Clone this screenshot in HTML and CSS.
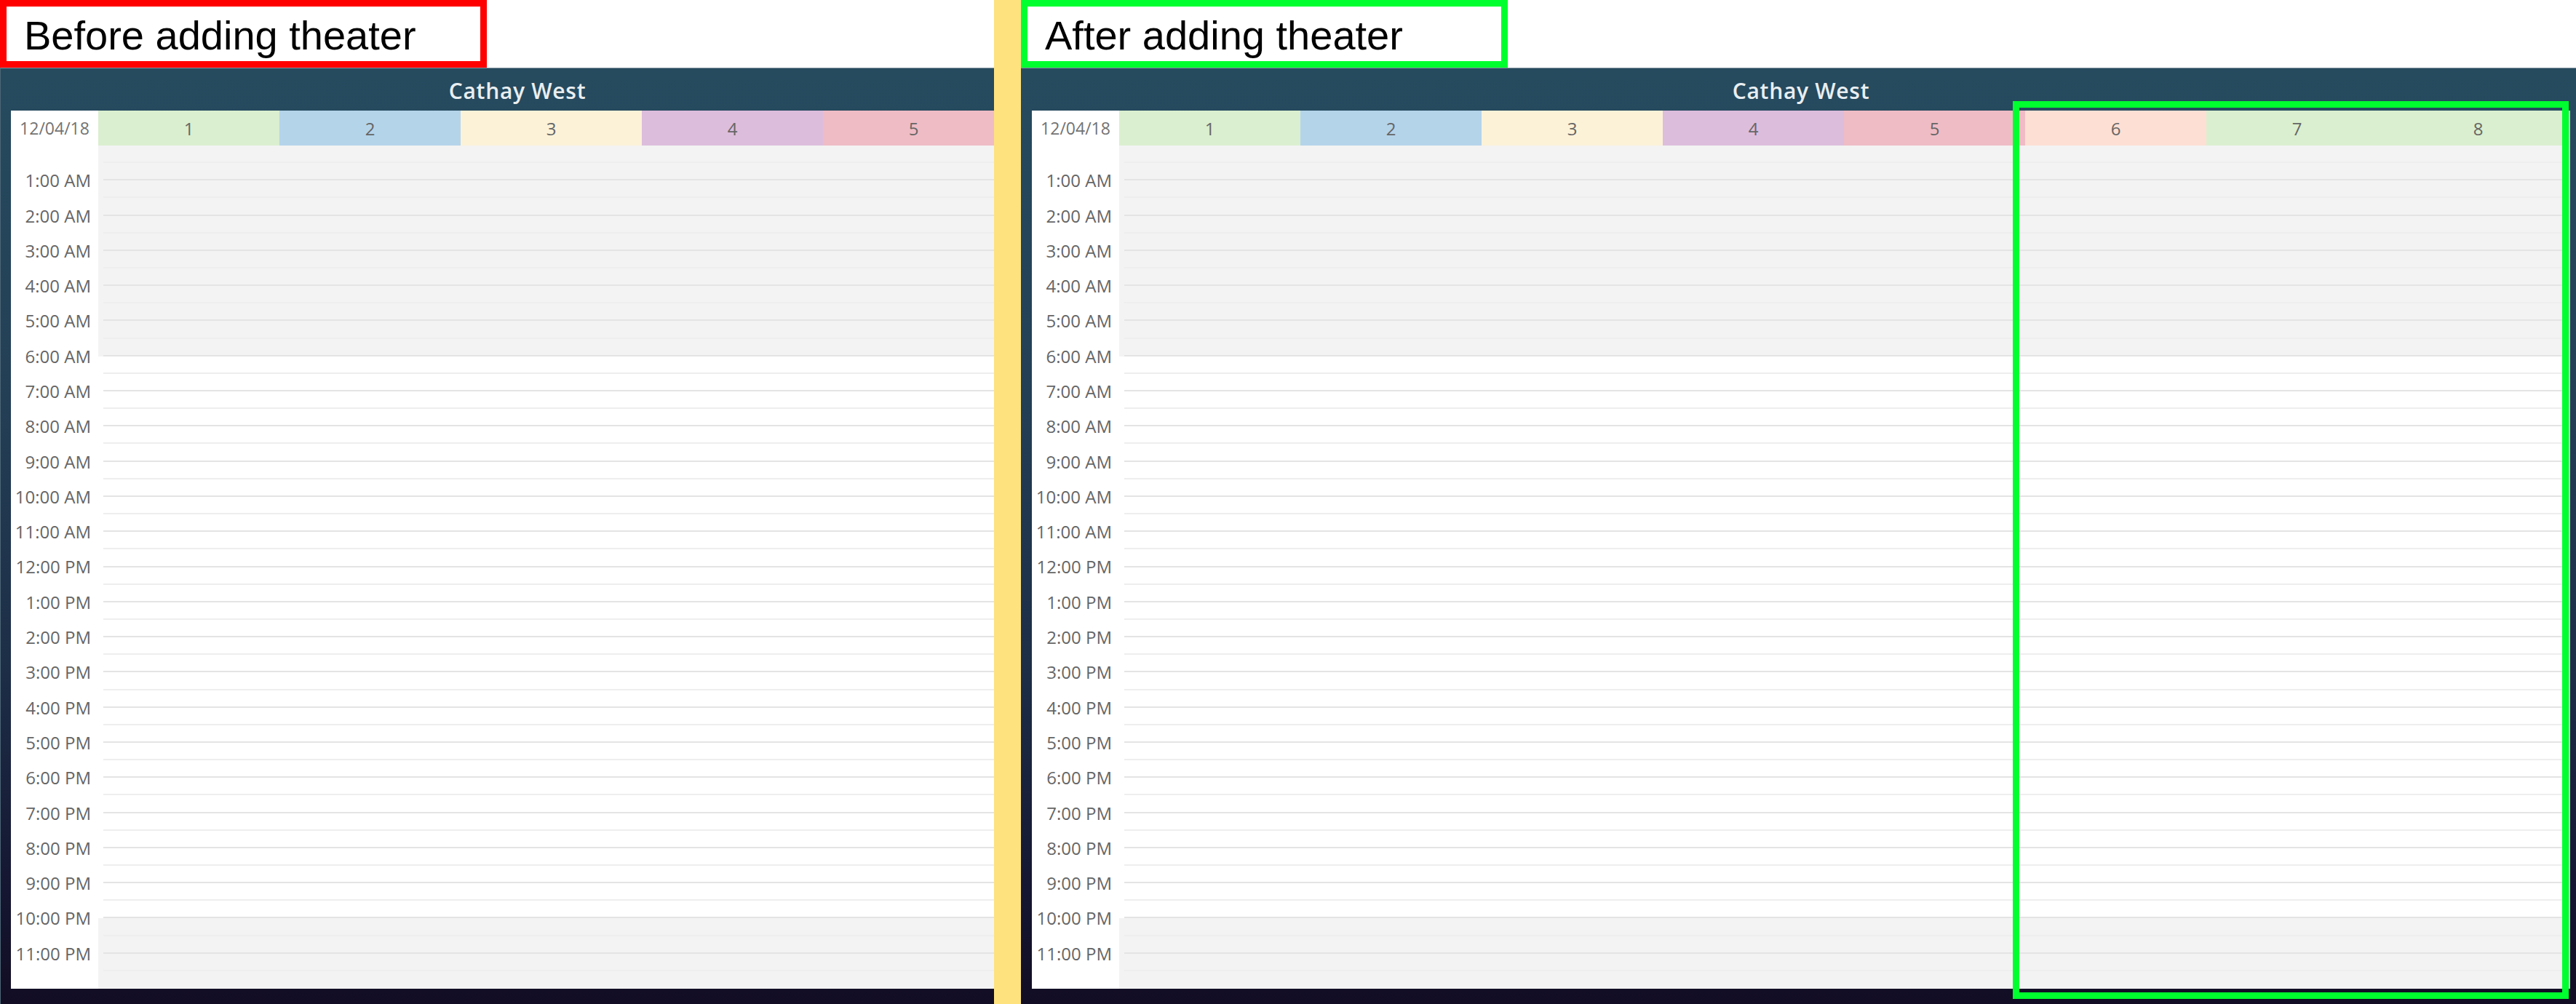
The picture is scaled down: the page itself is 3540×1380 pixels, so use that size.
FILE: index.html
```html
<!DOCTYPE html>
<html lang="en">
<head>
<meta charset="utf-8">
<title>Cathay West – before / after adding theater</title>
<link rel="stylesheet" href="styles.css">
</head>
<body>
<div class="page">
  <section class="side side-before">
    <div class="label label-red">Before adding theater</div>
    <div class="panel panel-left">
      <div class="panel-inner panel-inner-wide">
        <div class="title">Cathay West</div>
        <div class="cal">
          <div class="cal-head cols-5">
            <div class="hcell date">12/04/18</div>
            <div class="hcell c-green">1</div>
            <div class="hcell c-blue">2</div>
            <div class="hcell c-cream">3</div>
            <div class="hcell c-lav">4</div>
            <div class="hcell c-pink">5</div>
          </div>
          <div class="cal-body">
            <div class="times">
              <div class="tsp"></div>
              <div class="t">1:00 AM</div><div class="t">2:00 AM</div><div class="t">3:00 AM</div><div class="t">4:00 AM</div>
              <div class="t">5:00 AM</div><div class="t">6:00 AM</div><div class="t">7:00 AM</div><div class="t">8:00 AM</div>
              <div class="t">9:00 AM</div><div class="t">10:00 AM</div><div class="t">11:00 AM</div><div class="t">12:00 PM</div>
              <div class="t">1:00 PM</div><div class="t">2:00 PM</div><div class="t">3:00 PM</div><div class="t">4:00 PM</div>
              <div class="t">5:00 PM</div><div class="t">6:00 PM</div><div class="t">7:00 PM</div><div class="t">8:00 PM</div>
              <div class="t">9:00 PM</div><div class="t">10:00 PM</div><div class="t">11:00 PM</div>
              <div class="tsp"></div>
            </div>
            <div class="slots">
              <div class="slot off"></div><div class="slot off hr"></div>
              <div class="slot off"></div><div class="slot off hr"></div>
              <div class="slot off"></div><div class="slot off hr"></div>
              <div class="slot off"></div><div class="slot off hr"></div>
              <div class="slot off"></div><div class="slot off hr"></div>
              <div class="slot off"></div><div class="slot off hr"></div>
              <div class="slot"></div><div class="slot hr"></div>
              <div class="slot"></div><div class="slot hr"></div>
              <div class="slot"></div><div class="slot hr"></div>
              <div class="slot"></div><div class="slot hr"></div>
              <div class="slot"></div><div class="slot hr"></div>
              <div class="slot"></div><div class="slot hr"></div>
              <div class="slot"></div><div class="slot hr"></div>
              <div class="slot"></div><div class="slot hr"></div>
              <div class="slot"></div><div class="slot hr"></div>
              <div class="slot"></div><div class="slot hr"></div>
              <div class="slot"></div><div class="slot hr"></div>
              <div class="slot"></div><div class="slot hr"></div>
              <div class="slot"></div><div class="slot hr"></div>
              <div class="slot"></div><div class="slot hr"></div>
              <div class="slot"></div><div class="slot hr"></div>
              <div class="slot"></div><div class="slot hr"></div>
              <div class="slot off"></div><div class="slot off hr"></div>
              <div class="slot off"></div><div class="slot off last"></div>
            </div>
          </div>
        </div>
      </div>
    </div>
  </section>

  <div class="divider"></div>

  <section class="side side-after">
    <div class="label label-green">After adding theater</div>
    <div class="panel panel-right">
      <div class="panel-inner">
        <div class="title">Cathay West</div>
        <div class="cal cal-edge">
          <div class="cal-head cols-8">
            <div class="hcell date">12/04/18</div>
            <div class="hcell c-green">1</div>
            <div class="hcell c-blue">2</div>
            <div class="hcell c-cream">3</div>
            <div class="hcell c-lav">4</div>
            <div class="hcell c-pink">5</div>
            <div class="hcell c-peach">6</div>
            <div class="hcell c-green">7</div>
            <div class="hcell c-green">8</div>
          </div>
          <div class="cal-body">
            <div class="times">
              <div class="tsp"></div>
              <div class="t">1:00 AM</div><div class="t">2:00 AM</div><div class="t">3:00 AM</div><div class="t">4:00 AM</div>
              <div class="t">5:00 AM</div><div class="t">6:00 AM</div><div class="t">7:00 AM</div><div class="t">8:00 AM</div>
              <div class="t">9:00 AM</div><div class="t">10:00 AM</div><div class="t">11:00 AM</div><div class="t">12:00 PM</div>
              <div class="t">1:00 PM</div><div class="t">2:00 PM</div><div class="t">3:00 PM</div><div class="t">4:00 PM</div>
              <div class="t">5:00 PM</div><div class="t">6:00 PM</div><div class="t">7:00 PM</div><div class="t">8:00 PM</div>
              <div class="t">9:00 PM</div><div class="t">10:00 PM</div><div class="t">11:00 PM</div>
              <div class="tsp"></div>
            </div>
            <div class="slots">
              <div class="slot off"></div><div class="slot off hr"></div>
              <div class="slot off"></div><div class="slot off hr"></div>
              <div class="slot off"></div><div class="slot off hr"></div>
              <div class="slot off"></div><div class="slot off hr"></div>
              <div class="slot off"></div><div class="slot off hr"></div>
              <div class="slot off"></div><div class="slot off hr"></div>
              <div class="slot"></div><div class="slot hr"></div>
              <div class="slot"></div><div class="slot hr"></div>
              <div class="slot"></div><div class="slot hr"></div>
              <div class="slot"></div><div class="slot hr"></div>
              <div class="slot"></div><div class="slot hr"></div>
              <div class="slot"></div><div class="slot hr"></div>
              <div class="slot"></div><div class="slot hr"></div>
              <div class="slot"></div><div class="slot hr"></div>
              <div class="slot"></div><div class="slot hr"></div>
              <div class="slot"></div><div class="slot hr"></div>
              <div class="slot"></div><div class="slot hr"></div>
              <div class="slot"></div><div class="slot hr"></div>
              <div class="slot"></div><div class="slot hr"></div>
              <div class="slot"></div><div class="slot hr"></div>
              <div class="slot"></div><div class="slot hr"></div>
              <div class="slot"></div><div class="slot hr"></div>
              <div class="slot off"></div><div class="slot off hr"></div>
              <div class="slot off"></div><div class="slot off last"></div>
            </div>
          </div>
        </div>
      </div>
    </div>
    <div class="highlight"></div>
  </section>
</div>
</body>
</html>
```

FILE: styles.css
```css
* { box-sizing: border-box; }

html, body {
  margin: 0;
  padding: 0;
  background: #ffffff;
}

.page {
  display: flex;
  width: 3540px;
  height: 1380px;
  overflow: hidden;
}

.side {
  display: flex;
  flex-direction: column;
  height: 100%;
  min-width: 0;
}

.side-before {
  width: 1366px;
  flex-shrink: 0;
  overflow: hidden;
}

.side-after {
  flex: 1;
  position: relative;
}

.divider {
  width: 37px;
  flex-shrink: 0;
  background: #fee27e;
}

/* annotation labels */
.label {
  width: 669px;
  height: 93px;
  flex-shrink: 0;
  border: 9px solid;
  padding: 9px 0 0 24px;
  font-family: "Liberation Sans", Arial, sans-serif;
  font-size: 56px;
  line-height: 62px;
  color: #000;
  background: #fff;
  white-space: nowrap;
}

.label-red { border-color: #ff0000; }
.label-green { border-color: #00ff2f; }

/* dark application panel */
.panel {
  flex: 1;
  min-height: 0;
  border-top: 1px solid #7f909b;
  background: linear-gradient(180deg, #264b5f 0%, #233f56 35%, #1d2d46 65%, #151631 88%, #120d24 100%);
  padding: 0 0 21px 15px;
  font-family: "Open Sans", "Noto Sans", sans-serif;
}

.panel-left {
  border-left: 1px solid #4d6676;
  padding-left: 14px;
}

.panel-right {
  padding-right: 8px;
}

.panel-inner {
  display: flex;
  flex-direction: column;
  height: 100%;
}

.panel-inner-wide {
  width: 1392px;
}

.title {
  height: 58px;
  flex-shrink: 0;
  display: flex;
  align-items: center;
  justify-content: center;
  color: #e9eef1;
  font-size: 30px;
  font-weight: 600;
  letter-spacing: 0.7px;
  padding-top: 2px;
}

.cal {
  flex: 1;
  min-height: 0;
  display: flex;
  flex-direction: column;
  background: #ffffff;
}

.cal-edge {
  border-right: 2px solid #c9cbcd;
}

.cal-head {
  height: 48px;
  flex-shrink: 0;
  display: grid;
}

.cols-5 { grid-template-columns: 120px repeat(5, 249px) 1fr; }
.cols-8 { grid-template-columns: 120px repeat(8, 1fr); }

.hcell {
  display: flex;
  align-items: center;
  justify-content: center;
  font-size: 24px;
  color: #666666;
}

.hcell.date {
  background: #ffffff;
  color: #737373;
  font-size: 23px;
}

.c-green { background: #daefcf; }
.c-blue { background: #b4d4ea; }
.c-cream { background: #fcf2d8; }
.c-lav { background: #dcbddc; }
.c-pink { background: #efbcc5; }
.c-peach { background: #fddfd4; }

.cal-body {
  flex: 1;
  min-height: 0;
  display: grid;
  grid-template-columns: 120px 1fr;
}

.times {
  display: grid;
  grid-template-rows: 0.5fr repeat(23, 1fr) 0.5fr;
  min-height: 0;
  background: #ffffff;
}

.t {
  display: flex;
  align-items: center;
  justify-content: flex-end;
  padding-right: 10px;
  font-size: 24px;
  line-height: 1;
  color: #666666;
  white-space: nowrap;
  min-height: 0;
}

.slots {
  display: grid;
  grid-template-rows: repeat(48, 1fr);
  min-height: 0;
}

.slot {
  background-color: #ffffff;
  background-image: linear-gradient(#eeeeee, #eeeeee);
  background-repeat: no-repeat;
  background-position: 7px 100%;
  background-size: calc(100% - 7px) 2px;
  min-height: 0;
}

.slot.off { background-color: #f3f3f3; }
.slot.hr { background-image: linear-gradient(#e4e4e4, #e4e4e4); }
.slot.last { background-image: none; }

/* green annotation frame around the newly added theaters */
.highlight {
  position: absolute;
  left: 1363px;
  top: 139px;
  width: 764px;
  height: 1234px;
  border: 9px solid #00ff2f;
  pointer-events: none;
}
```
